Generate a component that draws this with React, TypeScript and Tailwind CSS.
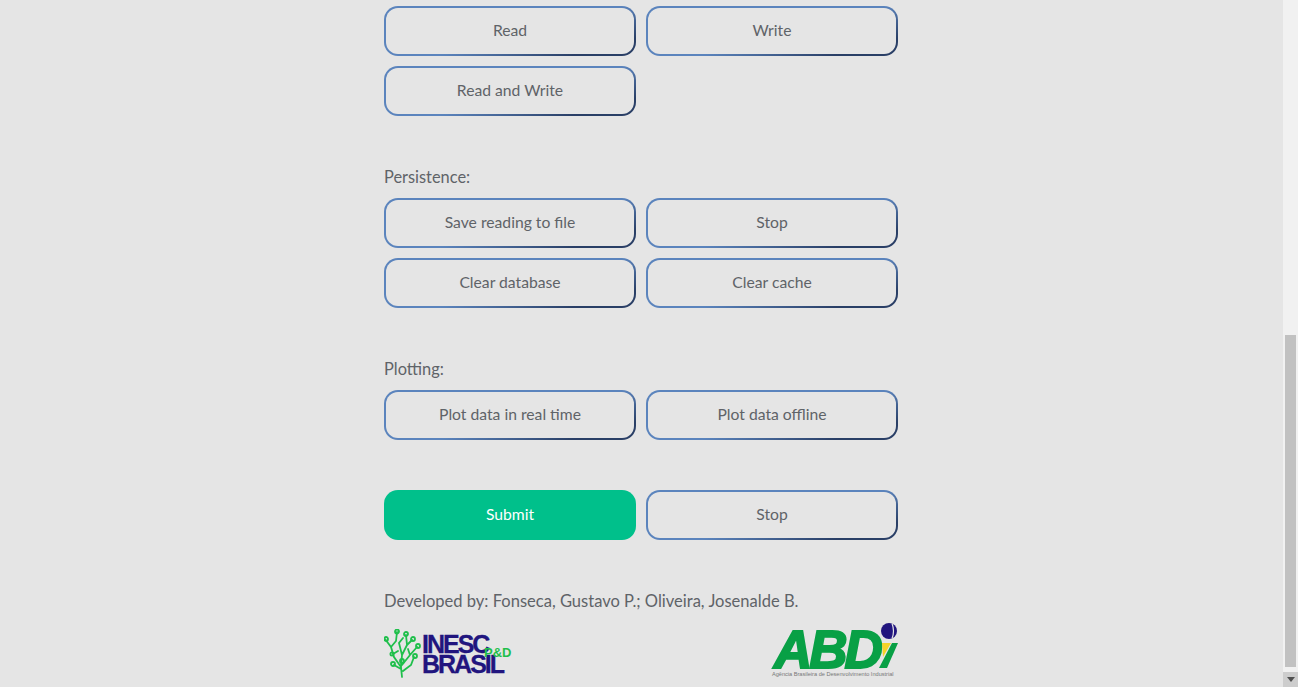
import React from "react";

const outline =
  "h-[50px] rounded-[14px] border-2 border-transparent text-[15.7px] text-[#5f6368] [background:linear-gradient(#e5e5e5,#e5e5e5)_padding-box,linear-gradient(165deg,#5b84bd_0%,#5b84bd_55%,#2a3f66_85%,#2a3f66_100%)_border-box]";

const label = "mt-[50px] mb-[11px] h-[21px] text-[16.4px] leading-[21px] text-[#5f6368]";

function Btn({ label }: { label: string }) {
  return <button className={outline}>{label}</button>;
}

function Logos() {
  return (
    <div className="flex items-start justify-between h-[64px]">
      <div className="flex mt-[6px] h-[50px] w-[128px]">
        <svg width="40" height="50" viewBox="0 0 40 50" className="shrink-0">
          <g stroke="#1fbf4b" strokeWidth="1.8" fill="none" strokeLinecap="round">
            <path d="M18 48L17 38L10 28L7 18L1 10M7 18L12 12L13 3M17 38L18 26L15 14L19 9M18 26L23 16L22 6M18 36L26 26L33 18M26 26L24 20M17 40L10 36M19 42L27 36L30 28M14 22L9 25M23 16L28 11" />
            <circle cx="2" cy="10" r="2" />
            <circle cx="13" cy="2.5" r="2" />
            <circle cx="22" cy="5" r="2" />
            <circle cx="29" cy="10" r="2" />
            <circle cx="34" cy="17" r="2" />
            <circle cx="31" cy="27" r="2" />
            <circle cx="9" cy="35" r="2" />
            <circle cx="8" cy="25" r="1.6" />
            <circle cx="18" cy="32" r="2" />
          </g>
        </svg>
        <div className="relative -ml-[2px] mt-[5px] font-['Liberation_Sans',sans-serif] font-bold text-[#21157e] text-[25px] leading-[20px] tracking-[-2px] [-webkit-text-stroke:0.3px_#21157e]">
          <div>INESC</div>
          <div>BRASIL</div>
          <span className="absolute left-[62px] top-[14px] text-[13px] leading-[10px] tracking-normal text-[#1fbf4b] [-webkit-text-stroke:0]">P&amp;D</span>
        </div>
      </div>
      <div className="relative h-[56px] w-[126px]">
        <div className="absolute left-[2px] top-[4px] font-['Liberation_Sans',sans-serif] font-bold italic text-[#08a045] text-[53px] leading-[46px] tracking-[-3px] [-webkit-text-stroke:2px_#08a045]">ABD</div>
        <svg width="27" height="56" viewBox="0 0 27 56" className="absolute right-0 top-0">
          <circle cx="18" cy="8" r="8" fill="#21157e" />
          <path d="M21 0.5Q24 8 21 15.5" stroke="#e5e5e5" strokeWidth="1.2" fill="none" />
          <path d="M21 20h6l-11 25h-8z" fill="#08a045" />
          <path d="M11 20h9l-8 14z" fill="#f5d327" />
        </svg>
        <div className="absolute left-0 top-[47px] whitespace-nowrap font-['Liberation_Sans',sans-serif] text-[5.6px] leading-[8px] text-[#777]">Agência Brasileira de Desenvolvimento Industrial</div>
      </div>
    </div>
  );
}

export default function App() {
  return (
    <div className="h-[687px] flex overflow-hidden bg-[#e5e5e5] font-['Lato',sans-serif]">
      <main className="flex-1 pt-[6px]">
        <div className="w-[514px] ml-[384px]">
          <div className="grid grid-cols-2 gap-[10px]">
            <Btn label="Read" />
            <Btn label="Write" />
            <Btn label="Read and Write" />
          </div>

          <p className={label}>Persistence:</p>
          <div className="grid grid-cols-2 gap-[10px]">
            <Btn label="Save reading to file" />
            <Btn label="Stop" />
            <Btn label="Clear database" />
            <Btn label="Clear cache" />
          </div>

          <p className={label}>Plotting:</p>
          <div className="grid grid-cols-2 gap-[10px]">
            <Btn label="Plot data in real time" />
            <Btn label="Plot data offline" />
          </div>

          <div className="grid grid-cols-2 gap-[10px] mt-[50px]">
            <button className="h-[50px] rounded-[14px] bg-[#00c08b] text-[15.7px] text-white">Submit</button>
            <Btn label="Stop" />
          </div>

          <p className="mt-[50px] h-[22px] text-[16.55px] leading-[22px] text-[#5f6368]">Developed by: Fonseca, Gustavo P.; Oliveira, Josenalde B.</p>
          <div className="mt-[11px]">
            <Logos />
          </div>
        </div>
      </main>

      <div className="w-[15px] shrink-0 flex flex-col bg-[#f1f1f1]">
        <div className="flex-1 pt-[335px] pb-[1px] px-[2px]">
          <div className="h-[332px] bg-[#c1c1c1]" />
        </div>
        <div className="h-[15px] flex items-center justify-center bg-[#cdcdcd]">
          <svg width="8" height="5" viewBox="0 0 8 5"><path d="M0 0h8L4 5z" fill="#505050" /></svg>
        </div>
      </div>
    </div>
  );
}
